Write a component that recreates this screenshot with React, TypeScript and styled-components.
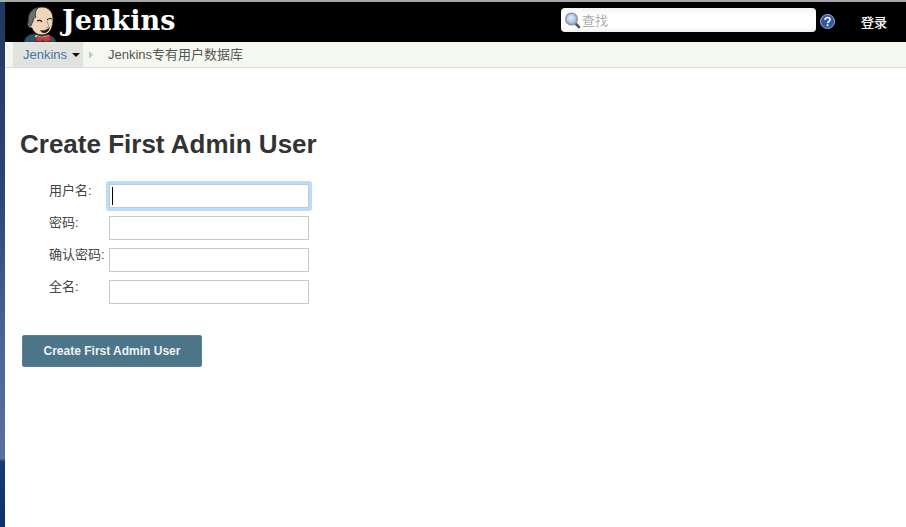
import React from "react";
import styled, { createGlobalStyle } from "styled-components";

const Global = createGlobalStyle`
  html, body { margin: 0; padding: 0; height: 100%; background: #fff; overflow: hidden; }
  body { font-family: "Liberation Sans", "Noto Sans CJK SC", sans-serif; }
  #root { height: 100%; }
`;

const Page = styled.div`
  width: 906px;
  height: 527px;
  display: flex;
  flex-direction: column;
`;
const WindowEdge = styled.div`
  height: 2px;
  flex: none;
  background: #a9a9a7;
`;
const Body = styled.div`
  flex: 1;
  display: flex;
  min-height: 0;
`;
const Desktop = styled.div`
  width: 5px;
  flex: none;
  background: linear-gradient(180deg, #22375f 0%, #2b4478 35%, #4a6596 65%, #58709f 87%, #1c3a72 87.5%, #123068 100%);
`;
const Main = styled.div`
  flex: 1;
  display: flex;
  flex-direction: column;
  min-width: 0;
`;
const Header = styled.header`
  height: 40px;
  flex: none;
  background: #000;
  display: flex;
  align-items: flex-start;
  overflow: hidden;
`;
const Mascot = styled.svg`
  width: 36px;
  height: 38px;
  margin: 2px 0 0 17px;
  flex: none;
`;
const Wordmark = styled.span`
  margin: 1px 0 0 4px;
  width: 393px;
  flex: none;
  font-family: "DejaVu Serif", serif;
  font-weight: 700;
  font-size: 27px;
  line-height: 36px;
  color: #fff;
`;
const Search = styled.div`
  width: 255px;
  height: 24px;
  margin: 6px 0 0 106px;
  flex: none;
  box-sizing: border-box;
  border-radius: 4px;
  background: linear-gradient(180deg, #f4f4f4 0%, #ffffff 30%, #ffffff 80%, #eeeeee 100%);
  display: flex;
  align-items: center;
  padding-left: 3px;
`;
const SearchInput = styled.input`
  flex: 1;
  min-width: 0;
  margin-left: 1px;
  padding: 0;
  border: 0;
  outline: 0;
  background: transparent;
  font-family: "Liberation Sans", "Noto Sans CJK SC", sans-serif;
  font-size: 13px;
  &::placeholder { color: #aeaeae; opacity: 1; }
`;
const HelpIcon = styled.svg`
  width: 15px;
  height: 15px;
  margin: 12px 0 0 4px;
  flex: none;
`;
const Login = styled.a`
  margin: 13px 0 0 26px;
  font-size: 13px;
  line-height: 16px;
  font-weight: 400;
  color: #fff;
  -webkit-text-stroke: 0.25px #fff;
`;
const Crumbs = styled.nav`
  height: 26px;
  flex: none;
  box-sizing: border-box;
  background: #f5f8f0;
  border-bottom: 1px solid #d9dbd6;
  display: flex;
  padding-left: 8px;
  font-size: 13px;
`;
const RootCrumb = styled.a`
  width: 70px;
  box-sizing: border-box;
  padding-left: 10px;
  background: #e1e4de;
  color: #4a70ad;
  display: flex;
  align-items: center;
  gap: 5px;
`;
const Caret = styled.i`
  width: 0;
  height: 0;
  border-left: 4px solid transparent;
  border-right: 4px solid transparent;
  border-top: 4px solid #111;
  margin-top: 1px;
`;
const Separator = styled.i`
  width: 0;
  height: 0;
  margin: 9px 0 0 6px;
  border-top: 4px solid transparent;
  border-bottom: 4px solid transparent;
  border-left: 4px solid #c3c8c0;
`;
const Crumb = styled.span`
  margin-left: 15px;
  color: #555;
  line-height: 25px;
`;
const Content = styled.main`
  flex: 1;
  padding: 0 0 0 15px;
`;
const Title = styled.h1`
  margin: 60px 0 0;
  font-size: 26px;
  line-height: 32px;
  font-weight: 700;
  color: #333;
`;
const Form = styled.form`
  margin: 24px 0 0 29px;
  display: grid;
  grid-template-columns: 60px 200px;
  grid-auto-rows: 24px;
  row-gap: 8px;
`;
const Label = styled.label`
  font-size: 13px;
  line-height: 14px;
  color: #444;
  white-space: nowrap;
`;
const FieldWrap = styled.div`
  position: relative;
`;
const Field = styled.input<{ $focused?: boolean }>`
  display: block;
  width: 200px;
  height: 24px;
  box-sizing: border-box;
  border: 1px solid #c8c8c8;
  background: #fff;
  outline: 0;
  padding: 0 3px;
  box-shadow: ${(p) => (p.$focused ? "0 0 0 3px #bcdcfd" : "none")};
  border-radius: ${(p) => (p.$focused ? "1px" : "0")};
`;
const TextCaret = styled.span`
  position: absolute;
  left: 3px;
  top: 3px;
  width: 1px;
  height: 18px;
  background: #000;
`;
const Submit = styled.button`
  margin: 31px 0 0 2px;
  width: 180px;
  height: 32px;
  display: block;
  border: 1px solid #5b8298;
  border-radius: 2px;
  background: #4d758a;
  color: #eef2f4;
  font-family: "Liberation Sans", sans-serif;
  font-size: 12px;
  font-weight: 700;
  padding: 0;
`;

export default function App() {
  return (
    <Page>
      <Global />
      <WindowEdge />
      <Body>
        <Desktop />
        <Main>
          <Header>
            <Mascot viewBox="0 0 36 38">
              <path d="M2 38C3 33 7 30 12 30L26 31C30 31 33 34 34 38z" fill="#2f5168" stroke="#1a2c38" strokeWidth="0.5" />
              <path d="M9 14C9 6 14 3 20 3C27 3 31 8 31 15C31 22 29 31 20 31C14 31 11 27 10 24C7 24 5 21 6 18C6 16 8 14 9 14z" fill="#f0d6b6" stroke="#231f20" strokeWidth="0.9" />
              <path d="M8 22C4 15 7 6 14 4C15 4 16 4 16 4C13 7 13 11 14 13C12 14 11 15 11 18C10 18 10 20 9 22z" fill="#6e6d70" stroke="#231f20" strokeWidth="0.7" />
              <path d="M15 17c2-1 4-1 5 1M25 16c1-1 3-2 5-1" fill="none" stroke="#231f20" strokeWidth="1.1" />
              <path d="M25 17l2 6-3 1" fill="none" stroke="#b58d70" strokeWidth="0.9" />
              <path d="M18 26c3 1 7 0 10-3-1 4-3 6-6 6-2 0-3-1-4-3z" fill="#231f20" />
              <path d="M14 31l6 2 7-2 1 2-8 2-7-2z" fill="#fff" />
              <path d="M15 32l5 1.500 1 0 7-2 1 5-6 1-2.500-2-2 2-5-1z" fill="#d33833" stroke="#6d1714" strokeWidth="0.4" />
            </Mascot>
            <Wordmark>Jenkins</Wordmark>
            <Search>
              <svg width="17" height="18" viewBox="0 0 17 18" style={{ flex: "none" }}>
                <defs>
                  <radialGradient id="lens" cx="45%" cy="40%" r="60%">
                    <stop offset="0%" stopColor="#e6eefa" />
                    <stop offset="100%" stopColor="#8fb0dc" />
                  </radialGradient>
                </defs>
                <path d="M11 12l4 4" stroke="#555" strokeWidth="2.6" strokeLinecap="round" />
                <circle cx="7.5" cy="8" r="5.8" fill="url(#lens)" stroke="#8e9aa8" strokeWidth="1.5" />
              </svg>
              <SearchInput placeholder="查找" />
            </Search>
            <HelpIcon viewBox="0 0 16 16">
              <circle cx="8" cy="8" r="7.5" fill="#2e5aa5" stroke="#cfd9ea" strokeWidth="0.8" />
              <path d="M5.4 6.300c0-1.600 1.200-2.500 2.700-2.500s2.600.9 2.600 2.200c0 2-2.600 2-2.600 3.800" fill="none" stroke="#fff" strokeWidth="1.700" />
              <circle cx="8.100" cy="12" r="1.100" fill="#fff" />
            </HelpIcon>
            <Login>登录</Login>
          </Header>
          <Crumbs>
            <RootCrumb>
              Jenkins
              <Caret />
            </RootCrumb>
            <Separator />
            <Crumb>Jenkins专有用户数据库</Crumb>
          </Crumbs>
          <Content>
            <Title>Create First Admin User</Title>
            <Form>
              <Label>用户名:</Label>
              <FieldWrap>
                <Field $focused />
                <TextCaret />
              </FieldWrap>
              <Label>密码:</Label>
              <Field type="password" />
              <Label>确认密码:</Label>
              <Field type="password" />
              <Label>全名:</Label>
              <Field />
            </Form>
            <Submit type="button">Create First Admin User</Submit>
          </Content>
        </Main>
      </Body>
    </Page>
  );
}
